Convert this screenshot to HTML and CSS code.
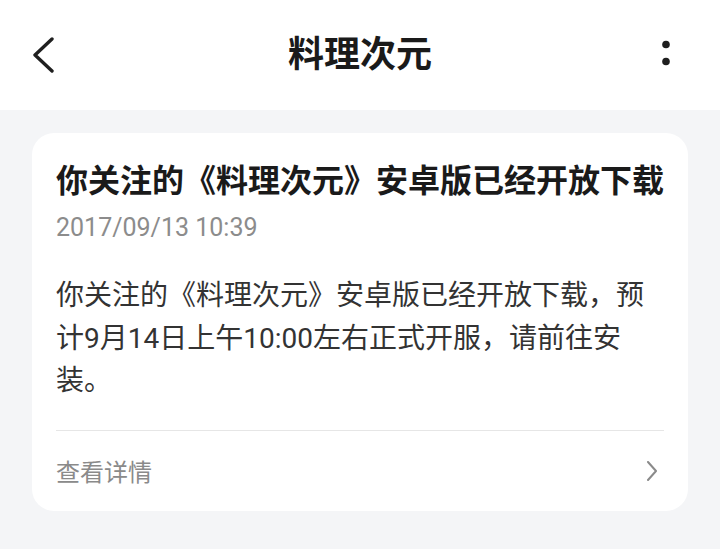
FILE: index.html
```html
<!DOCTYPE html>
<html lang="zh-CN">
<head>
  <meta charset="UTF-8">
  <meta name="viewport" content="width=device-width, initial-scale=1.0">
  <title>料理次元</title>
  <link rel="stylesheet" href="styles.css">
</head>
<body>

  <!-- Barra superior -->
  <header class="topbar">
    <div class="topbar-left">
      <svg class="icon-back" width="24" height="36" viewBox="0 0 24 36">
        <path d="M20 2 L3 18 L20 34" fill="none" stroke="#1f1f1f" stroke-width="3.4" stroke-linecap="round" stroke-linejoin="round"/>
      </svg>
    </div>
    <h1 class="topbar-title">料理次元</h1>
    <div class="topbar-right">
      <svg class="icon-more" width="8" height="30" viewBox="0 0 8 30">
        <circle cx="4" cy="4.5" r="3.8" fill="#1f1f1f"/>
        <circle cx="4" cy="21.5" r="3.8" fill="#1f1f1f"/>
      </svg>
    </div>
  </header>

  <!-- Conteúdo -->
  <main class="content">
    <div class="card">
      <h2 class="card-title">你关注的《料理次元》安卓版已经开放下载</h2>
      <div class="card-date">2017/09/13 10:39</div>
      <p class="card-text">你关注的《料理次元》安卓版已经开放下载，预计9月14日上午10:00左右正式开服，请前往安装。</p>
      <div class="card-footer">
        <span>查看详情</span>
        <svg class="icon-next" width="12" height="20" viewBox="0 0 12 20">
          <path d="M2 1 L10 10 L2 19" fill="none" stroke="#8a8a8a" stroke-width="2" stroke-linecap="round" stroke-linejoin="round"/>
        </svg>
      </div>
    </div>
  </main>

</body>
</html>
```

FILE: styles.css
```css
/* Corpo */
body {
  margin: 0;
  padding: 0;
  font-family: Roboto, "Noto Sans CJK SC", sans-serif;
  background-color: #f4f5f7;
  min-height: 100vh;
}

/* Barra superior */
.topbar {
  height: 110px;
  background-color: #ffffff;
  display: grid;
  grid-template-columns: 1fr auto 1fr;
  align-items: center;
}

.topbar-left {
  padding-left: 32px;
  display: flex;
}

.topbar-right {
  padding-right: 50px;
  display: flex;
  justify-content: flex-end;
}

.topbar-title {
  margin: 0;
  font-size: 36px;
  font-weight: 700;
  color: #1a1a1a;
  line-height: 1;
}

/* Cartão */
.content {
  padding: 23px 32px 0;
}

.card {
  background-color: #ffffff;
  border-radius: 22px;
  padding: 24px 24px 0;
}

.card-title {
  margin: 0;
  font-size: 32px;
  font-weight: 700;
  line-height: 48px;
  color: #1a1a1a;
  white-space: nowrap;
}

.card-date {
  margin-top: 6px;
  font-size: 25px;
  line-height: 34px;
  color: #8c8c8c;
}

.card-text {
  margin: 30px 0 0;
  font-size: 28px;
  line-height: 42.5px;
  color: #333333;
}

.card-footer {
  margin-top: 27px;
  border-top: 1px solid #e6e6e6;
  height: 80px;
  display: flex;
  justify-content: space-between;
  align-items: center;
  font-size: 24px;
  color: #8a8a8a;
}

.icon-next {
  margin-right: 6px;
}
```
